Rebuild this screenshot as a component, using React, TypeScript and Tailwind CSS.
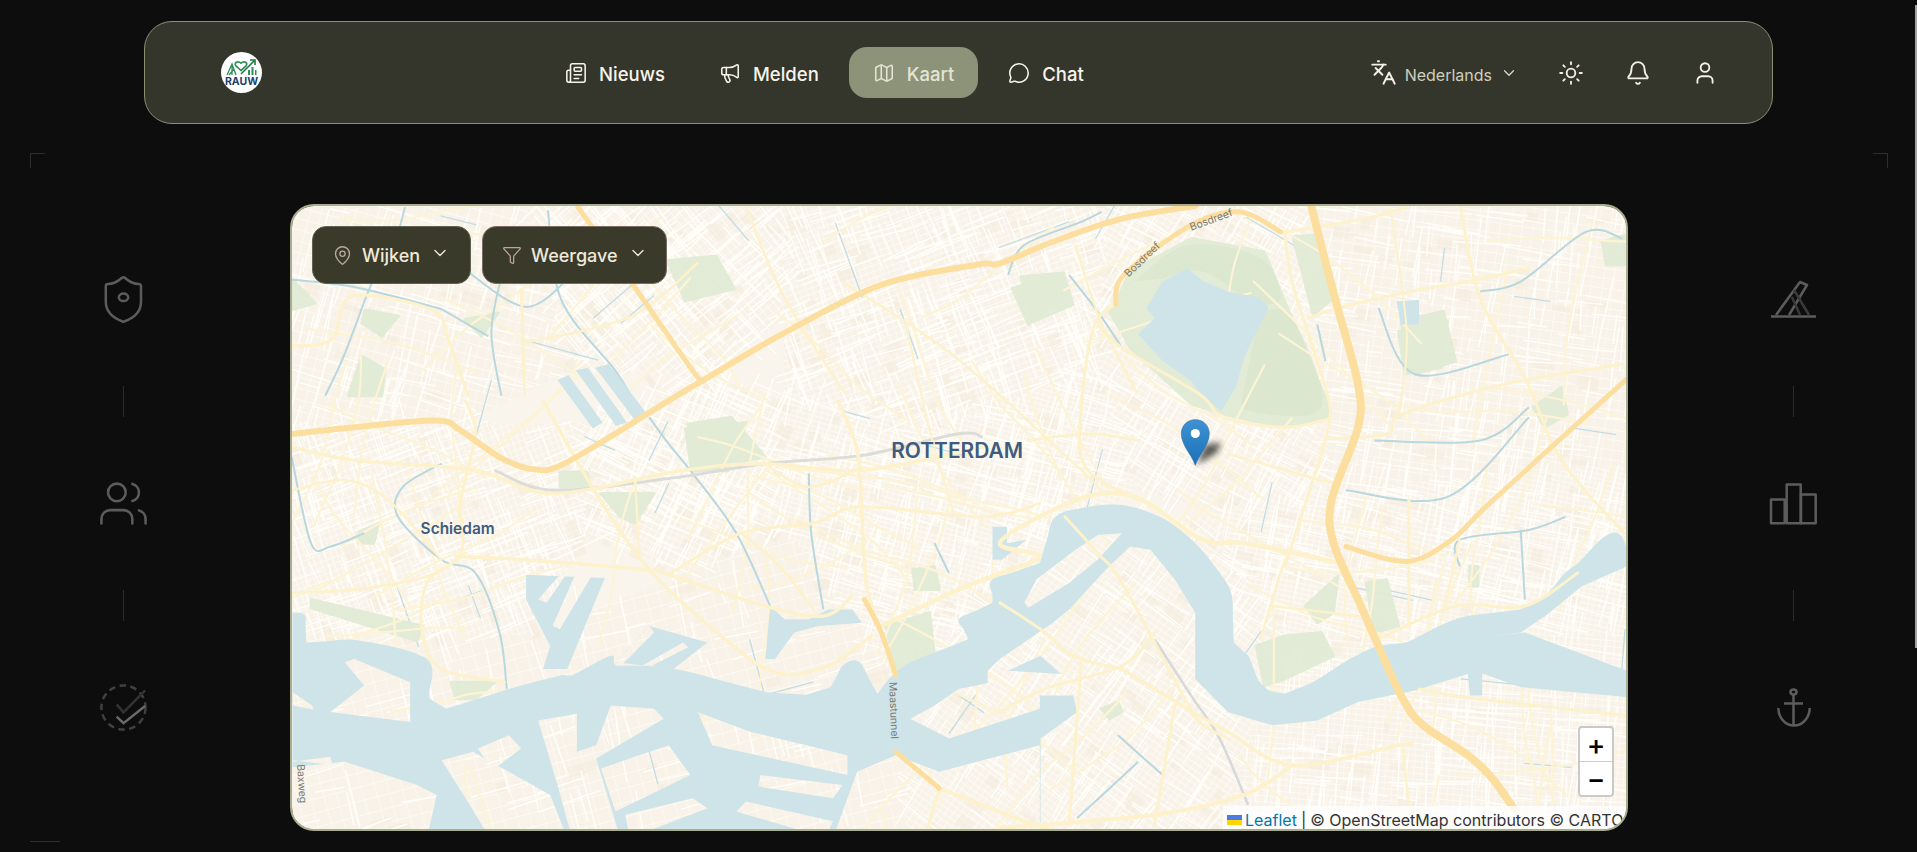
import React from "react";
import { Newspaper, Megaphone, Map as MapIcon, MessageCircle, Languages, ChevronDown, Sun, Bell, User, MapPin, Funnel, Users } from "lucide-react";

type Pt = number[];
const z8 = (a: Pt[]) => a.map(([x, y]) => [280 + x / 2.063, 400 + y / 3]);
const z7 = (a: Pt[]) => a.map(([x, y]) => [1000 + x / 2.45, 200 + y / 3]);
const z9 = (a: Pt[]) => a.map(([x, y]) => [1000 + x / 2.45, 500 + y / 3]);
const z3 = (a: Pt[]) => a.map(([x, y]) => [280 + x / 3, 195 + y / 3]);
const ov = (a: Pt[]) => a.map(([x, y]) => [x * 1.2226, y * 1.2226]);
const pd = (p: Pt[]) => "M" + p.map((q) => q[0].toFixed(1) + " " + q[1].toFixed(1)).join("L") + "Z";
const sm = (p: Pt[]) => {
  let d = "M" + p[0][0].toFixed(1) + " " + p[0][1].toFixed(1);
  for (let i = 0; i < p.length - 1; i++) {
    const a = p[Math.max(i - 1, 0)], b = p[i], c = p[i + 1], e = p[Math.min(i + 2, p.length - 1)];
    d += "C" + (b[0] + (c[0] - a[0]) / 6).toFixed(1) + " " + (b[1] + (c[1] - a[1]) / 6).toFixed(1) + " " + (c[0] - (e[0] - b[0]) / 6).toFixed(1) + " " + (c[1] - (e[1] - b[1]) / 6).toFixed(1) + " " + c[0].toFixed(1) + " " + c[1].toFixed(1);
  }
  return d;
};

const districts: { id: string; ang: number; w: number; h: number; n: number; p: Pt[] }[] = [
  { id: "d1", ang: 15, w: 22, h: 11, n: 120, p: ov([[238, 168], [430, 168], [470, 300], [380, 345], [238, 345]]) },
  { id: "d2", ang: 50, w: 15, h: 7, n: 240, p: ov([[430, 168], [640, 168], [640, 260], [575, 310], [470, 300]]) },
  { id: "d3", ang: -20, w: 14, h: 6, n: 300, p: ov([[640, 168], [900, 168], [900, 300], [760, 350], [640, 320], [640, 260]]) },
  { id: "d4", ang: 70, w: 13, h: 6, n: 260, p: ov([[238, 345], [470, 345], [480, 440], [430, 520], [238, 520]]) },
  { id: "d5", ang: 25, w: 13, h: 6, n: 220, p: ov([[470, 345], [575, 310], [640, 320], [640, 430], [560, 470], [480, 440]]) },
  { id: "d6", ang: 15, w: 12, h: 5, n: 300, p: ov([[640, 320], [760, 350], [900, 300], [930, 400], [830, 460], [740, 560], [640, 430]]) },
  { id: "d7", ang: 30, w: 13, h: 6, n: 240, p: ov([[900, 168], [1070, 168], [1090, 400], [990, 420], [930, 400], [900, 300]]) },
  { id: "d8", ang: 8, w: 22, h: 10, n: 200, p: ov([[1070, 168], [1332, 168], [1332, 380], [1090, 400]]) },
  { id: "d9", ang: 12, w: 12, h: 5, n: 240, p: ov([[990, 420], [1090, 400], [1332, 380], [1332, 520], [1050, 520]]) },
  { id: "d10", ang: 35, w: 13, h: 6, n: 260, p: ov([[740, 560], [830, 460], [990, 420], [1050, 520], [1000, 680], [740, 680]]) },
  { id: "d11", ang: 5, w: 14, h: 6, n: 220, p: ov([[1050, 520], [1332, 520], [1332, 680], [1000, 680]]) },
  { id: "d12", ang: -15, w: 26, h: 14, n: 120, p: ov([[238, 520], [430, 520], [560, 470], [640, 430], [740, 560], [740, 680], [238, 680]]) },
];

let seed = 11;
const rnd = () => {
  seed = (seed * 16807) % 2147483647;
  return seed / 2147483647;
};
const inside = (x: number, y: number, p: Pt[]) => {
  let c = false;
  for (let i = 0, j = p.length - 1; i < p.length; j = i++) {
    if (p[i][1] > y !== p[j][1] > y && x < ((p[j][0] - p[i][0]) * (y - p[i][1])) / (p[j][1] - p[i][1]) + p[i][0]) c = !c;
  }
  return c;
};
let streets = "";
let tints = "";
const pale: string[] = [];
const thinWater: string[] = [];
districts.forEach((d) => {
  const xs = d.p.map((q) => q[0]), ys = d.p.map((q) => q[1]);
  const x0 = Math.min(...xs), x1 = Math.max(...xs), y0 = Math.min(...ys), y1 = Math.max(...ys);
  const pick = () => {
    for (let t = 0; t < 30; t++) {
      const x = x0 + rnd() * (x1 - x0), y = y0 + rnd() * (y1 - y0);
      if (inside(x, y, d.p)) return [x, y];
    }
    return [(x0 + x1) / 2, (y0 + y1) / 2];
  };
  for (let i = 0; i < d.n; i++) {
    const [cx, cy] = pick();
    const l = 8 + rnd() * 28;
    const a = ((d.ang + (rnd() > 0.45 ? 90 : 0) + (rnd() - 0.5) * 12) * Math.PI) / 180;
    streets += "M" + (cx - Math.cos(a) * l).toFixed(0) + " " + (cy - Math.sin(a) * l).toFixed(0) + "L" + (cx + Math.cos(a) * l).toFixed(0) + " " + (cy + Math.sin(a) * l).toFixed(0);
  }
  for (let i = 0; i < d.n / 5; i++) {
    const [cx, cy] = pick();
    const a = (d.ang * Math.PI) / 180;
    const w = 6 + rnd() * 16, h = 4 + rnd() * 9;
    const ux = Math.cos(a), uy = Math.sin(a);
    tints += pd([[cx, cy], [cx + ux * w, cy + uy * w], [cx + ux * w - uy * h, cy + uy * w + ux * h], [cx - uy * h, cy + ux * h]]);
  }
  for (let i = 0; i < 9; i++) {
    const [cx, cy] = pick();
    const a0 = ((d.ang + (rnd() > 0.5 ? 90 : 0)) * Math.PI) / 180;
    const pts: Pt[] = [[cx, cy]];
    let a = a0;
    for (let k = 0; k < 3; k++) {
      a += (rnd() - 0.5) * 0.5;
      const l = 35 + rnd() * 45;
      const q = pts[pts.length - 1];
      pts.push([q[0] + Math.cos(a) * l, q[1] + Math.sin(a) * l]);
    }
    pale.push(sm(pts));
  }
  for (let i = 0; i < 3; i++) {
    const [cx, cy] = pick();
    const a = ((d.ang + (rnd() > 0.5 ? 90 : 0)) * Math.PI) / 180;
    const l = 14 + rnd() * 26;
    thinWater.push("M" + (cx - Math.cos(a) * l).toFixed(0) + " " + (cy - Math.sin(a) * l).toFixed(0) + "L" + (cx + Math.cos(a) * l).toFixed(0) + " " + (cy + Math.sin(a) * l).toFixed(0));
  }
});

const waterMain: Pt[] = [
  ...z8([[22, 640], [48, 650], [50, 730], [150, 722], [300, 780], [305, 900], [340, 930], [470, 870], [575, 830], [600, 830], [680, 770], [690, 800], [745, 800], [810, 810], [850, 822], [1000, 880], [1085, 888], [1135, 865], [1160, 800], [1195, 790], [1232, 885], [1250, 850], [1300, 790], [1420, 720], [1400, 660], [1470, 610], [1470, 540], [1568, 490]]),
  ...z9([[130, 60], [200, 25], [300, 15], [400, 55], [480, 130], [540, 220], [570, 290], [575, 430], [610, 470], [635, 545], [660, 575], [700, 585], [770, 550], [860, 480], [930, 440], [1000, 430], [1080, 380], [1150, 350], [1280, 330], [1340, 290], [1410, 200], [1540, 150], [1540, 1000], [-800, 1000]]),
  ...z8([[22, 1320]]),
];
const lands: Pt[][] = [
  z9([[320, 140], [370, 150], [430, 240], [480, 340], [480, 540], [560, 640], [670, 680], [780, 665], [880, 610], [1020, 575], [1150, 525], [1190, 525], [1280, 565], [1540, 595], [1540, 1030], [100, 1030], [100, 720], [190, 640], [180, 590], [-30, 590], [-30, 515], [0, 480], [130, 370], [170, 330], [260, 210]]),
  z9([[1210, 410], [1280, 400], [1340, 350], [1430, 260], [1540, 200], [1540, 515], [1400, 450], [1290, 400]]),
  z9([[60, 310], [70, 325], [170, 250], [240, 180], [300, 100], [240, 105], [180, 155], [90, 240]]),
  z8([[22, 1090], [100, 1075], [105, 1100], [22, 1085]]),
  z8([[0, 1110], [130, 1090], [280, 1160], [320, 1190], [300, 1320], [0, 1320]]),
  z8([[100, 940], [170, 860], [130, 790], [150, 780], [265, 850], [265, 970]]),
  z8([[22, 880], [62, 920], [65, 932], [22, 920]]),
  z8([[330, 1085], [395, 1060], [555, 1190], [590, 1320], [430, 1320], [380, 1200]]),
  z8([[405, 1050], [470, 1010], [495, 1050], [435, 1115]]),
  z8([[530, 965], [610, 945], [610, 1060], [650, 1040], [680, 920], [770, 930], [790, 960], [650, 1080], [700, 1320], [600, 1320], [570, 1160]]),
  z8([[660, 1110], [800, 1040], [845, 1130], [690, 1240]]),
  z8([[720, 1320], [880, 1230], [850, 1200], [710, 1250]]),
  z8([[860, 940], [970, 1000], [1170, 1070], [1170, 1130], [890, 1040]]),
  z8([[990, 1130], [1160, 1160], [1140, 1200], [985, 1165]]),
  z8([[960, 1210], [1140, 1270], [1125, 1320], [940, 1240]]),
  z8([[1140, 1320], [1190, 1120], [1270, 1070], [1360, 1120], [1568, 1040], [1568, 1320]]),
  z8([[1300, 960], [1350, 920], [1400, 870], [1470, 850], [1568, 880], [1568, 930], [1380, 1020]]),
  z8([[530, 600], [575, 525], [585, 530], [548, 610]]),
  z8([[560, 680], [605, 530], [640, 530], [575, 690]]),
  z8([[690, 790], [760, 680], [770, 700], [705, 795]]),
  z8([[745, 800], [830, 730], [840, 745], [765, 800]]),
];
const extraWater: Pt[][] = [
  z8([[505, 525], [668, 535], [590, 810], [540, 810], [555, 740], [505, 600]]),
  z8([[690, 790], [760, 680], [880, 730], [810, 810]]),
  z9([[100, 470], [150, 525], [20, 515]]),
  z9([[1150, 525], [1185, 525], [1185, 590], [1155, 590]]),
  z7([[460, 200], [500, 240], [560, 270], [640, 290], [660, 320], [600, 470], [580, 560], [545, 630], [500, 590], [470, 540], [400, 480], [340, 400], [380, 350], [360, 320], [400, 240]]),
  z7([[975, 300], [1030, 295], [1030, 370], [985, 370]]),
  ov([[486, 300], [497, 297], [530, 340], [520, 345]]),
  ov([[470, 302], [480, 300], [512, 345], [503, 348]]),
  ov([[455, 310], [464, 306], [492, 345], [484, 350]]),
  z8([[1010, 620], [1040, 660], [1090, 660], [1130, 630], [1180, 630], [1200, 670], [1110, 680], [1060, 700], [1020, 780], [1000, 780]]),
  z8([[1470, 380], [1500, 380], [1500, 430], [1540, 420], [1490, 480], [1470, 480]]),
];
const canals: Pt[][] = [
  z8([[760, 50], [800, 130], [850, 220], [940, 400], [1010, 620]]),
  z8([[1090, 220], [1095, 400], [1120, 630]]),
  z8([[330, 190], [250, 260], [240, 350], [330, 480], [400, 520], [450, 700], [465, 870]]),
  z8([[20, 170], [60, 430], [100, 440], [170, 400]]),
  z8([[1350, 430], [1380, 520]]),
  z3([[660, 240], [630, 410], [660, 600]]),
  z3([[370, 30], [340, 130], [270, 260], [190, 470], [130, 600]]),
  z3([[800, 40], [840, 310], [1000, 520], [1050, 600]]),
  z3([[30, 250], [210, 270], [450, 330], [500, 350], [620, 420]]),
  z7([[20, 220], [60, 130], [200, 60], [250, 30]]),
  z7([[170, 220], [240, 330], [300, 440]]),
  z7([[780, 370], [800, 480]]),
  z7([[1530, 110], [1440, 90], [1280, 240], [1180, 270]]),
  z7([[930, 320], [1020, 520], [1250, 460]]),
  z7([[920, 720], [1180, 720], [1300, 620]]),
  z7([[850, 870], [1100, 890], [1300, 650]]),
  z9([[290, 710], [400, 830]]),
  z9([[340, 790], [190, 960]]),
  z9([[1280, 90], [1290, 300]]),
  z9([[1130, 200], [1130, 120], [1300, 90], [1390, 50]]),
  ov([[380, 220], [430, 250], [470, 220]]),
];
const parks: Pt[][] = [
  z7([[290, 290], [320, 210], [470, 110], [650, 150], [700, 300], [810, 620], [810, 650], [700, 680], [580, 650], [470, 610], [320, 440], [270, 330]]),
  z7([[30, 260], [150, 220], [170, 270], [70, 370]]),
  z7([[985, 360], [1090, 330], [1120, 480], [1020, 520]]),
  z7([[720, 105], [770, 100], [820, 290], [770, 340]]),
  z7([[1310, 620], [1380, 560], [1395, 640], [1340, 680]]),
  z7([[1480, 120], [1535, 100], [1535, 190], [1490, 190]]),
  z8([[840, 70], [930, 50], [1000, 170], [850, 210]]),
  z8([[575, 215], [630, 215], [640, 260], [575, 260]]),
  z8([[660, 280], [770, 280], [730, 370], [700, 350]]),
  z8([[60, 600], [290, 680], [280, 725], [60, 625]]),
  z8([[350, 850], [440, 850], [400, 900], [360, 900]]),
  z8([[1250, 680], [1340, 640], [1350, 770], [1270, 820]]),
  z8([[1305, 510], [1350, 500], [1360, 570], [1310, 570]]),
  z8([[160, 395], [200, 370], [190, 430], [160, 430]]),
  z8([[1190, 1010], [1250, 1000], [1250, 1070], [1200, 1070]]),
  z9([[630, 440], [700, 410], [790, 400], [820, 470], [700, 540], [650, 560]]),
  z9([[900, 250], [950, 240], [980, 380], [920, 400]]),
  z9([[750, 320], [830, 230], [820, 340], [780, 370]]),
  z9([[1155, 200], [1175, 200], [1175, 260], [1155, 260]]),
  z9([[250, 630], [290, 610], [300, 640], [270, 660]]),
  z3([[240, 480], [310, 520], [300, 600], [200, 600]]),
  z3([[550, 370], [650, 350], [600, 420]]),
  z3([[32, 250], [100, 320], [32, 340]]),
  z3([[250, 340], [350, 360], [300, 420], [240, 380]]),
  ov([[545, 212], [585, 208], [600, 235], [560, 245]]),
  ov([[835, 225], [870, 222], [878, 248], [845, 262]]),
  ov([[560, 350], [610, 345], [595, 385], [565, 385]]),
  ov([[1145, 270], [1185, 262], [1180, 300], [1150, 305]]),
];
const motor: [Pt[], number][] = [
  [[...z8([[0, 104], [150, 80], [320, 60], [370, 90], [450, 170], [520, 207], [590, 185], [800, 0]]), ...ov([[575, 310], [640, 272], [720, 232], [800, 215]]), ...z7([[0, 185], [130, 120], [300, 50], [480, 12]])], 6],
  [[...z7([[765, 10], [800, 180], [830, 320], [880, 550], [880, 680], [815, 900]]), ...z9([[820, 130], [880, 300], [930, 440], [990, 600], [1040, 680], [1150, 770], [1210, 840], [1265, 935]])], 8],
  [z7([[850, 1040], [1000, 1085], [1110, 1020], [1190, 925], [1360, 735], [1540, 535]]), 5],
  [z7([[285, 310], [305, 220], [470, 70], [590, 30], [690, 90]]), 5],
  [[...z3([[890, 30], [1060, 270], [1240, 530]]), ...ov([[575, 310]])], 5],
  [z8([[1205, 600], [1240, 700], [1270, 830]]), 5],
  [z8([[1270, 1060], [1360, 1170]]), 5],
];
const primary: [Pt[], number][] = [
  [z8([[1150, 0], [1190, 150], [1200, 350], [1210, 560], [1240, 700]]), 3.5],
  [z8([[1360, 1170], [1568, 1285], [1700, 1320]]), 4],
  [z8([[1360, 1170], [1330, 1320]]), 3],
  [[...z8([[1240, 680], [1400, 570], [1470, 530], [1568, 470]]), ...z7([[0, 1030], [130, 930], [250, 880], [350, 900], [500, 1020], [600, 1030], [800, 1080], [815, 1085]])], 4.5],
  [z8([[360, 470], [500, 480], [750, 510], [800, 525], [1000, 620], [1120, 650], [1180, 590]]), 3.5],
  [z8([[22, 140], [150, 180], [400, 210], [560, 280], [830, 210], [1000, 190], [1200, 210], [1450, 140]]), 3.5],
  [z8([[22, 580], [150, 570], [300, 530], [380, 460]]), 3],
  [z8([[380, 0], [400, 100], [370, 300], [370, 460], [300, 550], [290, 700], [330, 810], [460, 850]]), 3],
  [z8([[540, 0], [650, 280], [760, 510], [900, 700], [1020, 820], [1130, 800], [1220, 710]]), 3.5],
  [z8([[800, 525], [950, 400], [1100, 370], [1200, 320], [1450, 350], [1568, 310]]), 3],
  [z8([[22, 270], [130, 240], [220, 300], [330, 480]]), 2.5],
  [z8([[950, 400], [1030, 500], [1100, 630]]), 2.5],
  [z8([[730, 230], [740, 480]]), 2.5],
  [z8([[1000, 190], [1090, 260], [1200, 200]]), 2.5],
  [z7([[280, 310], [230, 380], [200, 620], [210, 800], [340, 900]]), 3],
  [z7([[280, 310], [240, 360], [300, 440], [490, 580], [550, 650], [700, 680], [810, 655]]), 3],
  [z7([[700, 90], [720, 250], [800, 560], [810, 660], [780, 800], [700, 1100]]), 3],
  [z7([[760, 350], [830, 320], [1010, 270], [1150, 240], [1300, 200]]), 3],
  [z7([[800, 715], [950, 700], [990, 640], [1240, 550], [1530, 490]]), 3],
  [z7([[560, 760], [760, 830], [830, 850]]), 2.5],
  [z7([[1130, 0], [1180, 290], [1290, 530], [1360, 735], [1430, 860], [1535, 1000]]), 3],
  [z7([[700, 90], [900, 50], [1000, 15]]), 3],
  [z7([[960, 20], [1000, 400], [980, 640]]), 2],
  [z7([[70, 720], [220, 700], [340, 720]]), 2.5],
  [z9([[300, 510], [420, 600], [560, 700], [720, 800], [980, 740], [1010, 740]]), 3.5],
  [z9([[720, 800], [600, 890], [380, 950], [0, 990]]), 4],
  [z9([[0, 310], [100, 390], [180, 470], [300, 510]]), 3],
  [z9([[160, 50], [240, 160], [300, 250], [450, 590], [490, 670], [560, 720]]), 3],
  [z9([[200, 490], [170, 980]]), 3],
  [z9([[430, 620], [380, 980]]), 3],
  [z9([[0, 640], [110, 570], [300, 500], [380, 400]]), 3],
  [z9([[1030, 570], [1170, 600], [1536, 650]]), 3],
  [z9([[930, 420], [1120, 320], [1290, 320], [1420, 220]]), 3],
  [z9([[1005, 0], [1005, 380]]), 3],
  [z9([[1090, 340], [1130, 120]]), 2.5],
  [z9([[700, 180], [640, 420]]), 2.5],
  [z9([[670, 320], [880, 350]]), 2.5],
  [z9([[990, 750], [1010, 980]]), 2.5],
  [z3([[30, 450], [150, 430], [210, 300], [450, 340], [500, 430], [560, 600]]), 3],
  [z3([[720, 280], [730, 600]]), 3],
  [z3([[730, 440], [1050, 360], [1250, 200]]), 2.5],
  [ov([[610, 168], [640, 240], [690, 320]]), 2.5],
  [ov([[690, 230], [780, 290], [880, 380], [900, 400]]), 2.5],
  [ov([[880, 200], [900, 260], [930, 320]]), 2.5],
  [ov([[740, 260], [760, 350], [780, 420]]), 2],
];

function MapDrawing() {
  return (
    <svg viewBox="290 204 1338 627" className="absolute inset-0 h-full w-full" preserveAspectRatio="none">
      <defs>
        {districts.map((d) => (
          <pattern key={d.id} id={d.id} width={d.w} height={d.h} patternUnits="userSpaceOnUse" patternTransform={`rotate(${d.ang})`}>
            <rect width={d.w} height={d.h} fill="#f8f2e8" />
            <path d={`M0 0H${d.w}M0 0V${d.h}`} stroke="#fffdf8" strokeWidth="1.4" fill="none" />
            <path d={`M${d.w / 2} 0V${d.h}`} stroke="#fffdf8" strokeWidth="0.6" fill="none" />
          </pattern>
        ))}
        <mask id="wm" maskUnits="userSpaceOnUse" x="290" y="204" width="1338" height="627">
          <rect x="290" y="204" width="1338" height="627" fill="black" />
          <path d={sm(waterMain)} fill="white" />
          <path d={pd(waterMain)} fill="white" />
          {lands.map((l, i) => <path key={i} d={pd(l)} fill="black" />)}
          {extraWater.map((l, i) => <path key={i} d={pd(l)} fill="white" />)}
          {lands.slice(17).map((l, i) => <path key={i} d={pd(l)} fill="black" />)}
        </mask>
      </defs>
      <rect x="290" y="204" width="1338" height="627" fill="#f9f5ec" />
      {districts.map((d) => <path key={d.id} d={pd(d.p)} fill={`url(#${d.id})`} />)}
      <path d={tints} fill="#f3e9d9" opacity="0.45" />
      <path d={streets} stroke="#fffefa" strokeWidth="1.5" fill="none" opacity="0.95" />
      <path d={thinWater.join("")} stroke="#c3dde3" strokeWidth="1.3" fill="none" />
      {parks.map((p, i) => <path key={i} d={pd(p)} fill="#e1ebd5" stroke="#e1ebd5" strokeWidth="3" strokeLinejoin="round" opacity="0.92" />)}
      <path d={sm(z7([[330, 240], [460, 130], [640, 170], [690, 290], [620, 300], [500, 210], [400, 230]]))} fill="#d9e7cc" opacity="0.7" />
      <path d={sm(z7([[640, 330], [720, 350], [790, 620], [610, 630], [600, 560]]))} fill="#d7e5c8" opacity="0.6" />
      <path d={pale.join("")} stroke="#fdf4d6" strokeWidth="2.2" fill="none" strokeLinecap="round" />
      {canals.map((c, i) => <path key={i} d={sm(c)} stroke="#b9d7df" strokeWidth="2" fill="none" />)}
      <rect x="290" y="204" width="1338" height="627" fill="#cee4e8" mask="url(#wm)" />
      <path d={sm(z8([[440, 210], [560, 270], [800, 235], [1000, 190], [1200, 165], [1400, 100], [1450, 110]]))} stroke="#dcdcd8" strokeWidth="3" fill="none" />
      <path d={sm(z9([[380, 420], [470, 590], [540, 720], [610, 920]]))} stroke="#d6d8da" strokeWidth="2.5" fill="none" />
      {primary.map(([p, w], i) => <path key={i} d={sm(p)} stroke="#fdf2cb" strokeWidth={w} fill="none" strokeLinecap="round" />)}
      {motor.map(([p, w], i) => <path key={i} d={sm(p)} stroke="#fcdf9f" strokeWidth={w} fill="none" strokeLinecap="round" />)}
      <g fontFamily="Inter, sans-serif" fill="#7c7a70" fontSize="10.5">
        <text transform="translate(1129 276) rotate(-44)">Bosdreef</text>
        <text transform="translate(1192 229) rotate(-20)">Bosdreef</text>
        <text transform="translate(889 683) rotate(88)">Maastunnel</text>
        <text transform="translate(295 766) rotate(86)">Baxweg</text>
      </g>
      <text x="891" y="458" fontFamily="Inter, sans-serif" fontWeight="600" fontSize="21" fill="#3f5b7e">ROTTERDAM</text>
      <text x="419" y="534" fontFamily="Inter, sans-serif" fontWeight="600" fontSize="15.5" fill="#3f5b7e">Schiedam</text>
      <defs>
        <linearGradient id="mk" x1="0" y1="0" x2="0" y2="1">
          <stop offset="0" stopColor="#3f93d3" />
          <stop offset="1" stopColor="#1a6fb8" />
        </linearGradient>
        <filter id="bl" x="-50%" y="-50%" width="200%" height="200%"><feGaussianBlur stdDeviation="3" /></filter>
      </defs>
      <path d="M1197 465 L1206 444 L1222 442 L1218 452Z" fill="#000" opacity="0.65" filter="url(#bl)" />
      <path d="M1196 465 C1193 455 1182 445 1182 433 C1182 425 1188 419 1196 419 C1204 419 1210 425 1210 433 C1210 445 1199 455 1196 465Z" fill="url(#mk)" stroke="#2a6ca5" strokeWidth="0.6" />
      <circle cx="1196" cy="433" r="4.6" fill="#fff" />
    </svg>
  );
}

const Item = ({ icon, label, active }: { icon: React.ReactNode; label: string; active?: boolean }) => (
  <div className={"flex h-[51px] items-center gap-3 rounded-[18px] px-6 text-[18.5px] font-medium " + (active ? "bg-[#8d9378] text-[#e4e4d4]" : "text-[#f6f4ea]")}>
    {icon}
    <span className="pt-[5px]">{label}</span>
  </div>
);

const Divider = () => <div className="my-[60px] h-[31px] w-px bg-[#2b2b2b]" />;

const stroke = "#5c5c5c";
const IconBox = ({ children }: { children: React.ReactNode }) => (
  <svg width="53" height="53" viewBox="0 0 53 53" fill="none" stroke={stroke} strokeWidth="2.5" strokeLinejoin="round">{children}</svg>
);

export default function App() {
  return (
    <div className="relative h-[852px] overflow-hidden bg-[#0d0d0d]" style={{ fontFamily: "Inter, sans-serif" }}>
      <div className="absolute right-0 top-[5px] h-[643px] w-[2px] bg-[#a3a3a3]" />
      <div className="absolute left-[30px] top-[153px] h-[15px] w-[15px] border-l border-t border-[#2e2e2e]" />
      <div className="absolute left-[1873px] top-[153px] h-[15px] w-[15px] border-r border-t border-[#2e2e2e]" />
      <div className="absolute left-[30px] top-[841px] h-px w-[30px] bg-[#2e2e2e]" />

      <header className="mx-[144px] mt-[21px] flex h-[103px] items-center rounded-[28px] border border-[#8c8f73] bg-[#35362b] pl-[76px]">
        <svg width="41" height="41" viewBox="0 0 41 41" className="shrink-0">
          <circle cx="20.5" cy="20.5" r="20.5" fill="#fff" />
          <path d="M6 23 L11 12 L15 23 M11 12 V23 M8 23 L13 17" stroke="#2f8f57" strokeWidth="1.3" fill="none" />
          <path d="M20 18.5 L14.8 13.6 C12.8 11 16.6 8.2 20 11.2 C23.4 8.2 27.2 11 25.2 13.6Z" stroke="#2f8f57" strokeWidth="1.7" fill="none" />
          <path d="M20 22 L28 14 L33 9 M29 8 H34 V13" stroke="#1f7a45" strokeWidth="1.6" fill="none" />
          <path d="M27 23 V18 H29 V23 M30.5 23 V15 H32.5 V23 M34 23 V18 H35.5 V23" fill="#2f8f57" />
          <text x="20.5" y="32.5" textAnchor="middle" fontSize="10.5" fontWeight="700" fontFamily="Inter, sans-serif" fill="#1c3f6e">RAUW</text>
        </svg>
        <nav className="ml-[279px] flex items-center gap-[6px]">
          <Item icon={<Newspaper size={22} strokeWidth={1.7} />} label="Nieuws" />
          <Item icon={<Megaphone size={22} strokeWidth={1.7} />} label="Melden" />
          <Item active icon={<MapIcon size={22} strokeWidth={1.7} />} label="Kaart" />
          <Item icon={<MessageCircle size={22} strokeWidth={1.7} />} label="Chat" />
        </nav>
        <div className="ml-auto flex items-center pr-[54px] text-[#f3f1e6]">
          <Languages size={27} strokeWidth={1.7} />
          <span className="ml-[8px] pt-[5px] text-base text-[#cfcfbd]">Nederlands</span>
          <ChevronDown size={18} strokeWidth={1.7} className="ml-[8px] text-[#d8d8c8]" />
          <Sun size={26} strokeWidth={1.7} className="ml-[40px]" />
          <Bell size={26} strokeWidth={1.7} className="ml-[41px]" />
          <User size={26} strokeWidth={1.7} className="ml-[41px]" />
        </div>
      </header>

      <main className="mt-[80px] flex">
        <aside className="flex w-[247px] flex-col items-center pt-[69px]">
          <IconBox>
            <path d="M44 28.8c0 11-7.7 16.5-16.9 19.7a2.2 2.2 0 0 1-1.5 0C16.5 45.100 8.800 39.600 8.800 28.800V13.200a2.200 2.200 0 0 1 2.200-2.200c4.400 0 9.900-2.600 13.700-6a2.600 2.600 0 0 1 3.400 0C31.900 8.400 37.400 11 41.800 11a2.200 2.200 0 0 1 2.200 2.200z" />
            <ellipse cx="26.500" cy="24.300" rx="4.700" ry="3.800" />
          </IconBox>
          <Divider />
          <Users size={53} strokeWidth={1.15} color={stroke} />
          <Divider />
          <svg width="53" height="53" viewBox="0 0 24 24" fill="none" strokeWidth="1.1">
            <circle cx="12" cy="12" r="10" stroke="#414141" strokeDasharray="3 2" />
            <path d="M8.900 10.600 12 14.200 21.800 4.200" stroke="#333" />
            <path d="M8.900 16.100 12 19.100 21.800 11.300" stroke="#6a6a6a" />
          </svg>
        </aside>
        <section className="relative ml-[43px] h-[627px] w-[1338px] shrink-0 overflow-hidden rounded-[24px] border-2 border-[#a8ad8f]">
          <MapDrawing />
          <div className="absolute left-[20px] top-[20px] flex gap-[11px] text-lg font-medium text-[#f0e9dc]">
            <div className="flex h-[58px] w-[159px] items-center rounded-[14px] border border-[#5f6350] bg-[#3a3a2b] pl-[19px]">
              <MapPin size={21} strokeWidth={1.5} className="text-[#bba99c]" />
              <span className="ml-[9px] pt-[2px]">Wijken</span>
              <ChevronDown size={20} strokeWidth={1.6} className="ml-[10px] -translate-y-[2px]" />
            </div>
            <div className="flex h-[58px] w-[185px] items-center rounded-[14px] border border-[#7a6c62] bg-[#3a3a2b] pl-[19px]">
              <Funnel size={20} strokeWidth={1.5} className="text-[#bba99c]" />
              <span className="ml-[9px] pt-[2px]">Weergave</span>
              <ChevronDown size={20} strokeWidth={1.6} className="ml-[10px] -translate-y-[2px]" />
            </div>
          </div>
          <div className="absolute right-[12px] top-[520px] flex w-[36px] flex-col overflow-hidden rounded-[4px] border-2 border-[#c9c9c6] bg-white text-[28px] font-medium leading-none text-black">
            <div className="flex h-[34px] items-center justify-center border-b border-[#ccc]">+</div>
            <div className="flex h-[33px] items-center justify-center">−</div>
          </div>
          <div className="absolute bottom-0 left-[931px] flex h-[23px] w-[420px] items-center whitespace-nowrap bg-white/80 pl-[4px] pt-[4px] text-base text-[#333]">
            <svg width="15" height="10" viewBox="0 0 12 8" className="mr-[3px] shrink-0">
              <rect width="12" height="4" fill="#4C7BE1" />
              <rect y="4" width="12" height="4" fill="#FFD500" />
            </svg>
            <span className="text-[#0078a8]">Leaflet</span>
            <span className="mx-[4px]">|</span>
            <span>© OpenStreetMap contributors © CARTO</span>
          </div>
        </section>
        <aside className="ml-[139px] flex w-[53px] shrink-0 flex-col items-center pt-[69px]">
          <IconBox>
            <path d="M4 43.500H49" />
            <path d="M9 42 33 9 40 12 22 42" />
            <path d="M27 17 42 42M25 24 33 42" stroke="#3a3a3a" />
          </IconBox>
          <Divider />
          <IconBox>
            <rect x="4" y="22.500" width="13.700" height="23.700" />
            <rect x="19.700" y="7.500" width="14" height="38.700" />
            <rect x="34" y="17.500" width="14.700" height="28.700" />
          </IconBox>
          <Divider />
          <IconBox>
            <ellipse cx="26.500" cy="11" rx="3" ry="2.500" />
            <path d="M26.500 13.500V45M17 22.400H36M11.300 27a15.700 17.500 0 0 0 31.400 0" />
          </IconBox>
        </aside>
      </main>
    </div>
  );
}
